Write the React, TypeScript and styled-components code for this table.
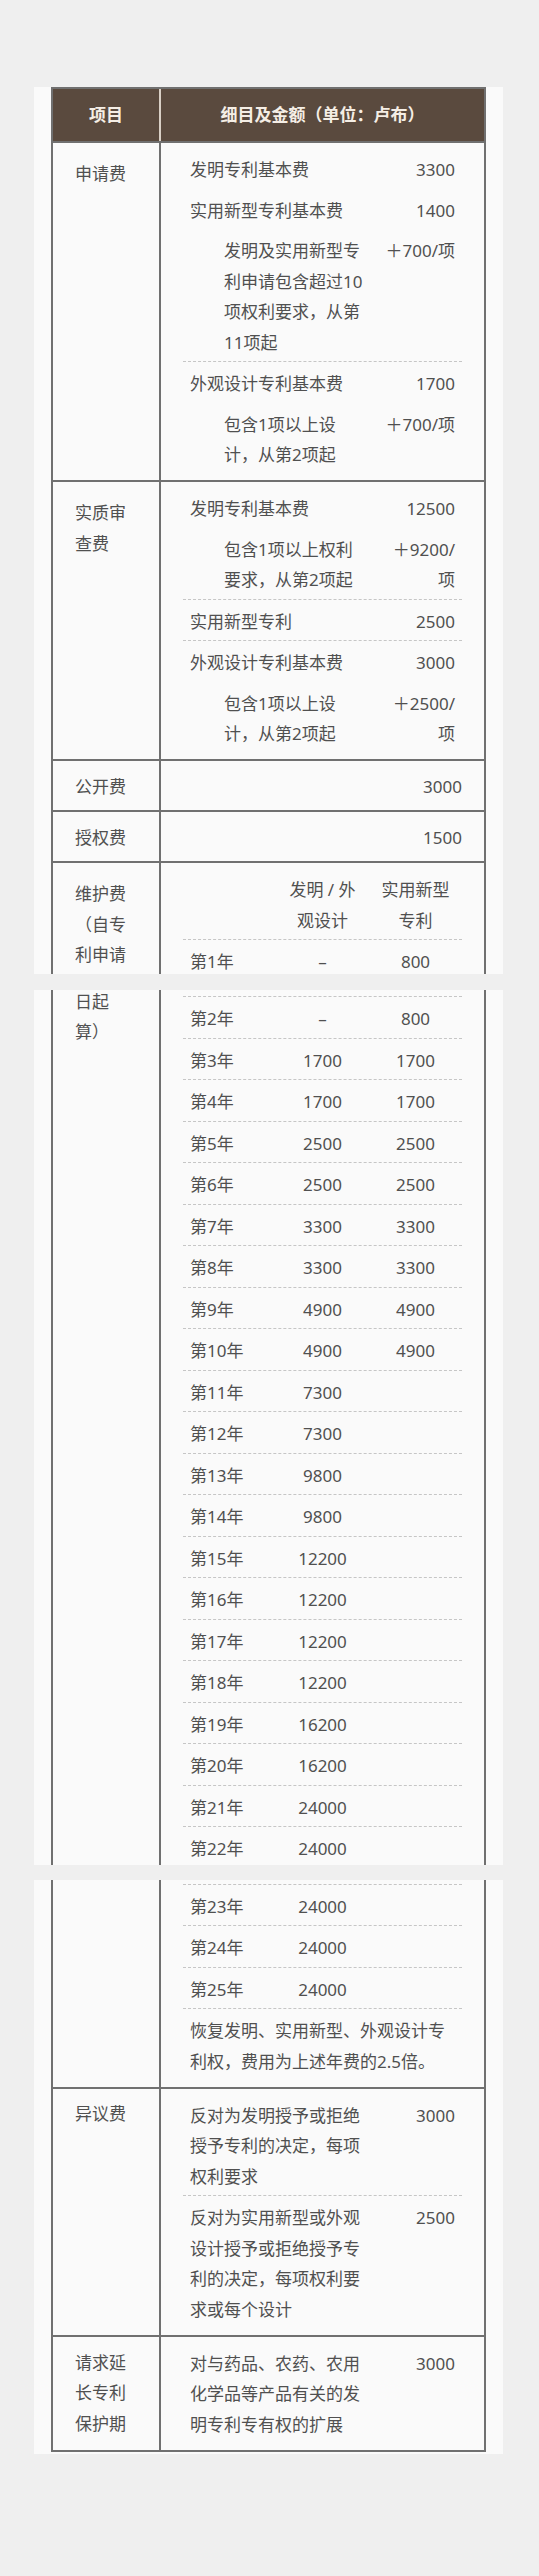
import styled, { createGlobalStyle } from 'styled-components'

const GlobalStyle = createGlobalStyle`
  html, body {
    margin: 0;
    padding: 0;
    background: #efefef;
  }
  body {
    font-family: "Noto Sans", "Noto Sans CJK SC", sans-serif;
    font-size: 17px;
    line-height: 30.5px;
    color: #505050;
  }
`

const rule = '2px solid #707070'

const Page = styled.div`
  padding: 87px 0 120px;
`

const Sheet = styled.div<{ $bottom?: number }>`
  width: 435px;
  margin-left: 34px;
  padding: 0 17px ${({ $bottom }) => $bottom ?? 0}px;
  background: #fafafa;
  overflow: hidden;
`

const Seam = styled.div`
  height: 15.5px;
`

const Frame = styled.div<{ $top?: boolean; $bottom?: boolean }>`
  border-left: ${rule};
  border-right: ${rule};
  border-top: ${({ $top }) => ($top ? rule : 'none')};
  border-bottom: ${({ $bottom }) => ($bottom ? rule : 'none')};
`

const HeadRow = styled.div`
  display: grid;
  grid-template-columns: 108px 1fr;
  height: 52px;
  background: #5a4a3e;
  color: #f5eee5;
  font-weight: 700;
`

const HeadCell = styled.div<{ $divider?: boolean }>`
  box-sizing: border-box;
  display: flex;
  align-items: center;
  justify-content: center;
  border-right: ${({ $divider }) => ($divider ? '2px solid #d9d0c6' : 'none')};
`

const Row = styled.div<{ $ruled?: boolean }>`
  display: grid;
  grid-template-columns: 108px 1fr;
  border-top: ${({ $ruled }) => ($ruled ? rule : 'none')};
`

const Item = styled.div<{ $pt: number }>`
  box-sizing: border-box;
  padding: ${({ $pt }) => $pt}px 25px 0 22px;
  border-right: ${rule};
`

const Shift = styled.div`
  margin-top: -3px;
`

const Detail = styled.div<{ $pt: number; $pb: number }>`
  padding: ${({ $pt }) => $pt}px 22px ${({ $pb }) => $pb}px;
`

const Amount = styled.div`
  padding: 10.5px 22px 8px;
  text-align: right;
`

const FeeLine = styled.div<{ $dashed?: boolean }>`
  display: grid;
  grid-template-columns: 1fr 90px;
  border-top: ${({ $dashed }) => ($dashed ? '1px dashed #c6c6c6' : 'none')};
`

const FeeName = styled.div<{ $sub?: boolean }>`
  padding: 7px 7px 3px ${({ $sub }) => ($sub ? 41 : 7)}px;
`

const FeePrice = styled.div`
  padding: 7px 7px 3px;
  text-align: right;
`

const YearLine = styled.div<{ $dashed?: boolean; $tail?: 'cut' | 'flush' }>`
  display: grid;
  grid-template-columns: repeat(3, 1fr);
  border-top: ${({ $dashed }) => ($dashed ? '1px dashed #c6c6c6' : 'none')};
  margin-bottom: ${({ $tail }) => ($tail === 'cut' ? '-3.5px' : '0')};

  & > div {
    padding-bottom: ${({ $tail }) => ($tail ? 0 : 3)}px;
  }
`

const YearCell = styled.div<{ $center?: boolean }>`
  padding: 7px 7px 3px;
  text-align: ${({ $center }) => ($center ? 'center' : 'left')};
`

const NoteLine = styled.div`
  padding: 7px 7px 3px;
  border-top: 1px dashed #c6c6c6;
`

type Fee = { label: string; price: string; sub?: boolean; dashed?: boolean }

const filing: Fee[] = [
  { label: '发明专利基本费', price: '3300' },
  { label: '实用新型专利基本费', price: '1400' },
  { label: '发明及实用新型专利申请包含超过10项权利要求，从第11项起', price: '＋700/项', sub: true },
  { label: '外观设计专利基本费', price: '1700', dashed: true },
  { label: '包含1项以上设计，从第2项起', price: '＋700/项', sub: true },
]

const examination: Fee[] = [
  { label: '发明专利基本费', price: '12500' },
  { label: '包含1项以上权利要求，从第2项起', price: '＋9200/项', sub: true },
  { label: '实用新型专利', price: '2500', dashed: true },
  { label: '外观设计专利基本费', price: '3000', dashed: true },
  { label: '包含1项以上设计，从第2项起', price: '＋2500/项', sub: true },
]

const objection: Fee[] = [
  { label: '反对为发明授予或拒绝授予专利的决定，每项权利要求', price: '3000' },
  {
    label: '反对为实用新型或外观设计授予或拒绝授予专利的决定，每项权利要求或每个设计',
    price: '2500',
    dashed: true,
  },
]

const extension: Fee[] = [
  { label: '对与药品、农药、农用化学品等产品有关的发明专利专有权的扩展', price: '3000' },
]

type Annual = { year: number; invention: string; utility?: string }

const annual: Annual[] = [
  { year: 1, invention: '–', utility: '800' },
  { year: 2, invention: '–', utility: '800' },
  { year: 3, invention: '1700', utility: '1700' },
  { year: 4, invention: '1700', utility: '1700' },
  { year: 5, invention: '2500', utility: '2500' },
  { year: 6, invention: '2500', utility: '2500' },
  { year: 7, invention: '3300', utility: '3300' },
  { year: 8, invention: '3300', utility: '3300' },
  { year: 9, invention: '4900', utility: '4900' },
  { year: 10, invention: '4900', utility: '4900' },
  { year: 11, invention: '7300' },
  { year: 12, invention: '7300' },
  { year: 13, invention: '9800' },
  { year: 14, invention: '9800' },
  { year: 15, invention: '12200' },
  { year: 16, invention: '12200' },
  { year: 17, invention: '12200' },
  { year: 18, invention: '12200' },
  { year: 19, invention: '16200' },
  { year: 20, invention: '16200' },
  { year: 21, invention: '24000' },
  { year: 22, invention: '24000' },
  { year: 23, invention: '24000' },
  { year: 24, invention: '24000' },
  { year: 25, invention: '24000' },
]

const Fees = ({ items }: { items: Fee[] }) => (
  <>
    {items.map((f, i) => (
      <FeeLine key={i} $dashed={f.dashed}>
        <FeeName $sub={f.sub}>{f.label}</FeeName>
        <FeePrice>{f.price}</FeePrice>
      </FeeLine>
    ))}
  </>
)

const Years = ({ from, to, tail }: { from: number; to: number; tail?: 'cut' | 'flush' }) => {
  const rows = annual.filter((a) => a.year >= from && a.year <= to)
  return (
    <>
      {rows.map((a, i) => (
        <YearLine key={a.year} $dashed $tail={i === rows.length - 1 ? tail : undefined}>
          <YearCell>第{a.year}年</YearCell>
          <YearCell $center>{a.invention}</YearCell>
          <YearCell $center>{a.utility}</YearCell>
        </YearLine>
      ))}
    </>
  )
}

export default function App() {
  return (
    <Page>
      <GlobalStyle />

      <Sheet>
        <Frame $top>
          <HeadRow>
            <HeadCell $divider>项目</HeadCell>
            <HeadCell>细目及金额（单位：卢布）</HeadCell>
          </HeadRow>

          <Row $ruled>
            <Item $pt={16}>申请费</Item>
            <Detail $pt={5} $pb={6.5}>
              <Fees items={filing} />
            </Detail>
          </Row>

          <Row $ruled>
            <Item $pt={16}>实质审查费</Item>
            <Detail $pt={5} $pb={6.5}>
              <Fees items={examination} />
            </Detail>
          </Row>

          <Row $ruled>
            <Item $pt={10.5}>公开费</Item>
            <Amount>3000</Amount>
          </Row>

          <Row $ruled>
            <Item $pt={10.5}>授权费</Item>
            <Amount>1500</Amount>
          </Row>

          <Row $ruled>
            <Item $pt={16}>维护费（自专利申请</Item>
            <Detail $pt={5} $pb={0}>
              <YearLine>
                <YearCell />
                <YearCell $center>发明 / 外观设计</YearCell>
                <YearCell $center>实用新型专利</YearCell>
              </YearLine>
              <Years from={1} to={1} tail="cut" />
            </Detail>
          </Row>
        </Frame>
      </Sheet>

      <Seam />

      <Sheet>
        <Frame>
          <Row>
            <Item $pt={0}>
              <Shift>日起算）</Shift>
            </Item>
            <Detail $pt={6.5} $pb={0}>
              <Years from={2} to={22} tail="flush" />
            </Detail>
          </Row>
        </Frame>
      </Sheet>

      <Seam />

      <Sheet $bottom={2}>
        <Frame $bottom>
          <Row>
            <Item $pt={0} />
            <Detail $pt={3.5} $pb={6.5}>
              <Years from={23} to={25} />
              <NoteLine>恢复发明、实用新型、外观设计专利权，费用为上述年费的2.5倍。</NoteLine>
            </Detail>
          </Row>

          <Row $ruled>
            <Item $pt={10}>异议费</Item>
            <Detail $pt={5} $pb={6.5}>
              <Fees items={objection} />
            </Detail>
          </Row>

          <Row $ruled>
            <Item $pt={11}>请求延长专利保护期</Item>
            <Detail $pt={5} $pb={6.5}>
              <Fees items={extension} />
            </Detail>
          </Row>
        </Frame>
      </Sheet>
    </Page>
  )
}
